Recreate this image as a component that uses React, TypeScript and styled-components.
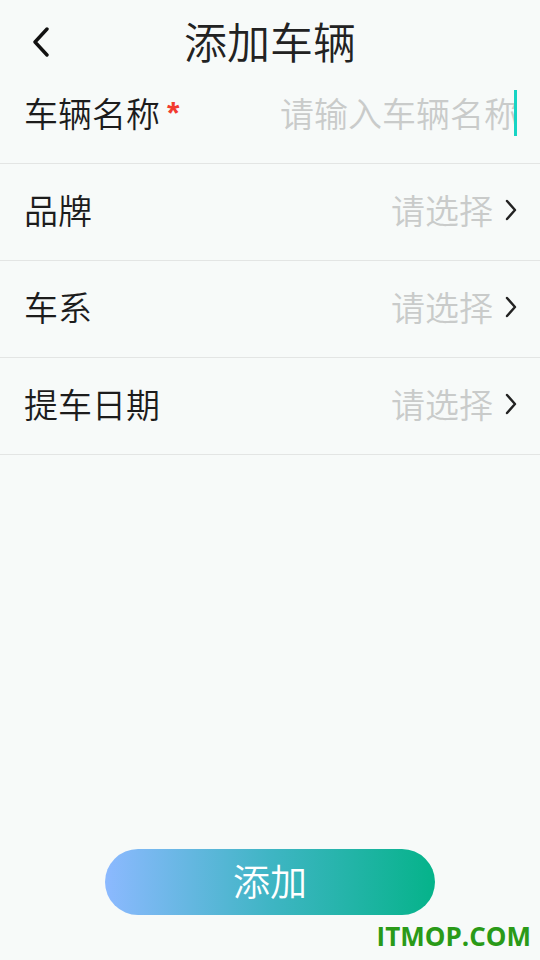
import React from "react";
import styled, { createGlobalStyle } from "styled-components";

const GlobalStyle = createGlobalStyle`
  html, body {
    margin: 0;
    padding: 0;
    background: #f7faf9;
  }
  body {
    font-family: "Noto Sans CJK SC", "Noto Sans", sans-serif;
  }
`;

const fields = [
  { label: "品牌", placeholder: "请选择" },
  { label: "车系", placeholder: "请选择" },
  { label: "提车日期", placeholder: "请选择" },
];

export default function App() {
  return (
    <Page>
      <GlobalStyle />
      <Header>
        <BackButton aria-label="back">
          <svg width="20" height="30" viewBox="0 0 20 30">
            <polyline
              points="16,2 4,15 16,28"
              fill="none"
              stroke="#111"
              strokeWidth="3.4"
              strokeLinecap="round"
              strokeLinejoin="round"
            />
          </svg>
        </BackButton>
        <Title>添加车辆</Title>
      </Header>

      <Row>
        <Label>
          车辆名称<Required>*</Required>
        </Label>
        <InputBox>
          <Placeholder>请输入车辆名称</Placeholder>
          <Cursor />
        </InputBox>
      </Row>

      {fields.map((f) => (
        <Row key={f.label}>
          <Label>{f.label}</Label>
          <Picker>
            <Placeholder>{f.placeholder}</Placeholder>
            <svg width="14" height="22" viewBox="0 0 14 22">
              <polyline
                points="3,2 11,11 3,20"
                fill="none"
                stroke="#222"
                strokeWidth="2.4"
                strokeLinecap="round"
                strokeLinejoin="round"
              />
            </svg>
          </Picker>
        </Row>
      ))}

      <Footer>
        <SubmitButton>添加</SubmitButton>
      </Footer>
      <Watermark>ITMOP.COM</Watermark>
    </Page>
  );
}

const Page = styled.div`
  position: relative;
  display: flex;
  flex-direction: column;
  min-height: 100vh;
  background: #f7faf9;
`;

const Header = styled.div`
  position: relative;
  display: flex;
  align-items: center;
  justify-content: center;
  height: 67px;
  padding-top: 12px;
  box-sizing: border-box;
`;

const BackButton = styled.div`
  position: absolute;
  left: 31px;
  top: 27px;
  display: flex;
`;

const Title = styled.h1`
  margin: 0;
  font-size: 43px;
  line-height: 50px;
  font-weight: 350;
  color: #222;
`;

const Row = styled.div`
  display: flex;
  align-items: center;
  justify-content: space-between;
  height: 97px;
  padding: 0 22px 6px 24px;
  box-sizing: border-box;
  border-bottom: 1px solid #e3e5e4;
`;

const Label = styled.div`
  display: flex;
  align-items: center;
  font-size: 34px;
  font-weight: 350;
  color: #1c1c1c;
  white-space: nowrap;
`;

const Required = styled.span`
  color: #f23b2f;
  font-family: "Liberation Sans", sans-serif;
  font-weight: 700;
  font-size: 32px;
  margin-left: 7px;
  margin-top: 2px;
`;

const InputBox = styled.div`
  display: flex;
  align-items: center;
  margin-right: 1px;
`;

const Placeholder = styled.span`
  font-size: 34px;
  font-weight: 350;
  color: #c9cbca;
  white-space: nowrap;
`;

const Cursor = styled.span`
  width: 3px;
  height: 46px;
  margin-left: -4px;
  margin-top: 2px;
  background: #17d4c4;
`;

const Picker = styled.div`
  display: flex;
  align-items: center;
  gap: 11px;
  svg {
    margin-top: 2px;
  }
`;

const Footer = styled.div`
  display: flex;
  justify-content: center;
  margin-top: auto;
  padding-bottom: 45px;
`;

const SubmitButton = styled.button`
  width: 330px;
  height: 66px;
  border: 0;
  border-radius: 33px;
  background: linear-gradient(90deg, #8cb9ff 0%, #3fb5c4 50%, #05b38a 100%);
  color: #fff;
  font-family: "Noto Sans CJK SC", sans-serif;
  font-size: 37px;
  font-weight: 350;
  padding: 0 0 4px;
`;

const Watermark = styled.div`
  position: absolute;
  right: 9px;
  bottom: 6px;
  font-family: "Open Sans", "Liberation Sans", sans-serif;
  font-weight: 700;
  font-size: 26px;
  color: #2a9a18;
`;
